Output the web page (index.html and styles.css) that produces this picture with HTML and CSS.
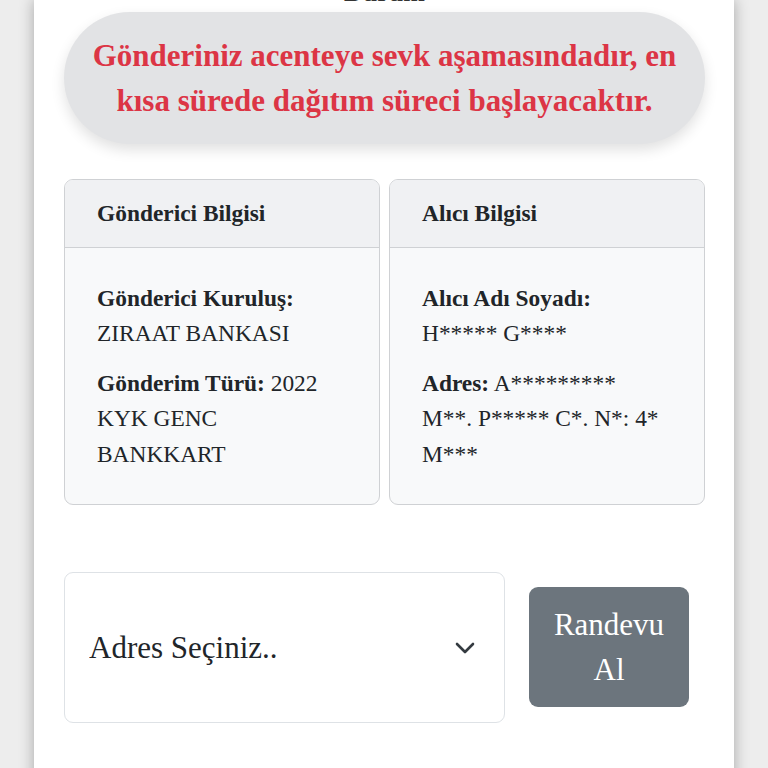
FILE: index.html
```html
<!DOCTYPE html>
<html lang="tr">
<head>
  <meta charset="UTF-8" />
  <meta name="viewport" content="width=device-width, initial-scale=1.0"/>
  <title>Gönderi Takip</title>
  <link rel="stylesheet" href="styles.css">
</head>
<body>
  <div class="page">
    <h5 class="status-title">Durum</h5>
    <div class="status-pill">
      Gönderiniz acenteye sevk aşamasındadır, en kısa sürede dağıtım süreci başlayacaktır.
    </div>

    <div class="cards">
      <div class="card">
        <div class="card-header">Gönderici Bilgisi</div>
        <div class="card-body">
          <p><b>Gönderici Kuruluş:</b> ZIRAAT BANKASI</p>
          <p><b>Gönderim Türü:</b> 2022 KYK GENC BANKKART</p>
        </div>
      </div>
      <div class="card">
        <div class="card-header">Alıcı Bilgisi</div>
        <div class="card-body">
          <p><b>Alıcı Adı Soyadı:</b> H***** G****</p>
          <p><b>Adres:</b> A********* M**. P***** C*. N*: 4* M***</p>
        </div>
      </div>
    </div>

    <div class="appointment">
      <div class="select-wrap">
        <select class="address-select">
          <option>Adres Seçiniz..</option>
        </select>
        <svg class="chevron" width="20" height="14" viewBox="0 0 20 14">
          <path d="M2 3 L10 11 L18 3" fill="none" stroke="#343a40" stroke-width="2.6" stroke-linecap="round" stroke-linejoin="round"/>
        </svg>
      </div>
      <button class="btn-randevu">Randevu Al</button>
    </div>
  </div>
</body>
</html>
```

FILE: styles.css
```css
* {
  box-sizing: border-box;
}

body {
  margin: 0;
  font-family: 'Liberation Serif', 'Times New Roman', serif;
  font-size: 23.4px;
  line-height: 1.5;
  color: #212529;
  background: #ededed;
}

.page {
  width: 700px;
  min-height: 820px;
  margin: 0 auto;
  padding: 1px 29px 0 30px;
  background: #fff;
  box-shadow: 0 0 14px rgba(0, 0, 0, 0.3);
}

.status-title {
  margin: -24px 0 4px;
  font-size: 26px;
  line-height: 31px;
  text-align: center;
  color: #333;
}

.status-pill {
  padding: 21px 14px;
  border-radius: 66px;
  background: #e2e3e5;
  box-shadow: 0 6px 14px rgba(0, 0, 0, 0.12);
  color: #dc3545;
  font-size: 31px;
  font-weight: bold;
  line-height: 45px;
  text-align: center;
}

.cards {
  display: grid;
  grid-template-columns: 1fr 1fr;
  gap: 9px;
  margin-top: 35px;
}

.card {
  border: 1px solid #cfd1d4;
  border-radius: 9px;
  overflow: hidden;
  background: #f8f9fa;
}

.card-header {
  padding: 16px 32px;
  background: #f0f1f3;
  border-bottom: 1px solid #cfd1d4;
  font-weight: bold;
}

.card-body {
  padding: 33px 42px 32px 32px;
}

.card-body p {
  margin: 0 0 15px;
}

.card-body p:last-child {
  margin-bottom: 0;
}

.appointment {
  display: flex;
  align-items: center;
  gap: 24px;
  margin-top: 67px;
}

.select-wrap {
  position: relative;
  width: 441px;
}

.address-select {
  display: block;
  width: 100%;
  height: 151px;
  padding: 0 60px 0 24px;
  border: 1px solid #dee2e6;
  border-radius: 9px;
  background: #fff;
  color: #212529;
  font-family: inherit;
  font-size: 31px;
  appearance: none;
  -webkit-appearance: none;
}

.chevron {
  position: absolute;
  right: 30px;
  top: 69px;
  pointer-events: none;
}

.btn-randevu {
  width: 160px;
  padding: 15px 18px;
  border: none;
  border-radius: 9px;
  background: #6c757d;
  color: #fff;
  font-family: inherit;
  font-size: 31px;
  line-height: 45px;
  cursor: pointer;
}
```
